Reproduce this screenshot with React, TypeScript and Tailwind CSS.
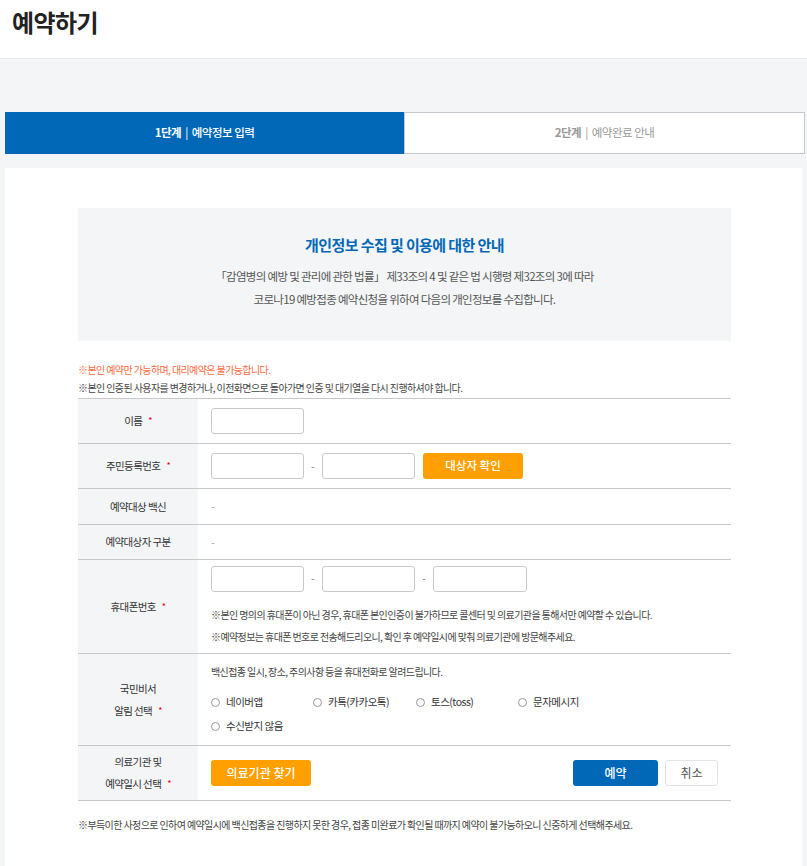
import { useState } from 'react';

const FONT = { fontFamily: '"Noto Sans CJK KR", "Noto Sans", sans-serif' };

const Star = () => <span className="ml-1.5 align-top text-[9px] text-[#e60012]">*</span>;

const Field = ({ w = 'w-[93px]' }: { w?: string }) => (
  <input type="text" className={`${w} h-[26px] rounded-[3px] border border-[#c8c8c8] bg-white px-2 text-[12px] outline-none`} />
);

const Dash = () => <span className="w-[18px] text-center text-[11px] text-[#888]">-</span>;

const Row = ({ label, className = '', children }: { label: React.ReactNode; className?: string; children: React.ReactNode }) => (
  <div className="flex border-b border-[#c8c8cc]">
    <div className={`flex w-[120px] shrink-0 items-center justify-center bg-[#f4f5f7] text-center text-[10.5px] leading-[22px] tracking-[-0.6px] text-[#333] ${className}`}>
      <div>{label}</div>
    </div>
    <div className="flex flex-1 items-center pl-[13px]">{children}</div>
  </div>
);

export default function App() {
  const [alarm, setAlarm] = useState('');
  const options = ['네이버앱', '카톡(카카오톡)', '토스(toss)', '문자메시지', '수신받지 않음'];

  return (
    <div className="min-h-[866px] bg-[#f4f5f7]" style={FONT}>
      <div className="h-[59px] border-b border-[#e6e7f0] bg-white pl-[12px] pt-[4px]">
        <h1 className="text-[24px] font-bold tracking-[-0.6px] text-[#222]">예약하기</h1>
      </div>

      <div className="pl-[5px] pr-[2px] pt-[53px]">
        <div className="flex h-[42px]">
          <div className="flex flex-1 items-center justify-center bg-[#0068b7] text-[11.5px] tracking-[-0.5px] text-white">
            <b>1단계</b>
            <span className="mx-[4px]">|</span>
            <span className="font-medium">예약정보 입력</span>
          </div>
          <div className="flex flex-1 items-center justify-center border border-[#c4c7cc] bg-white text-[11.5px] tracking-[-0.5px] text-[#999]">
            <b className="text-[#999]">2단계</b>
            <span className="mx-[4px]">|</span>
            <span>예약완료 안내</span>
          </div>
        </div>

        <div className="mr-[3px] mt-[14px] min-h-[700px] bg-white pt-[40px]">
          <div className="ml-[73px] w-[653px]">
            <div className="flex h-[133px] flex-col items-center bg-[#f4f5f7] pt-[26px] text-center">
              <h2 className="text-[15px] font-bold tracking-[-0.6px] text-[#0068b7]">개인정보 수집 및 이용에 대한 안내</h2>
              <p className="mt-[8px] text-[11.5px] leading-[23px] tracking-[-0.7px] text-[#555]">
                「감염병의 예방 및 관리에 관한 법률」 제33조의 4 및 같은 법 시행령 제32조의 3에 따라
                <br />
                코로나19 예방접종 예약신청을 위하여 다음의 개인정보를 수집합니다.
              </p>
            </div>

            <p className="mt-[20px] text-[10px] leading-[18px] tracking-[-0.6px] text-[#ff6a3d]">※본인 예약만 가능하며, 대리예약은 불가능합니다.</p>
            <p className="text-[10px] leading-[18px] tracking-[-0.6px] text-[#444]">※본인 인증된 사용자를 변경하거나, 이전화면으로 돌아가면 인증 및 대기열을 다시 진행하셔야 합니다.</p>

            <div className="mt-[1px] border-t border-[#c8c8cc]">
              <Row label={<>이름<Star /></>} className="h-[44px]">
                <Field />
              </Row>
              <Row label={<>주민등록번호<Star /></>} className="h-[44px]">
                <Field />
                <Dash />
                <Field />
                <button className="ml-[8px] h-[26px] w-[100px] rounded-[3px] bg-[#ff9f00] text-[11.5px] font-medium text-white">대상자 확인</button>
              </Row>
              <Row label="예약대상 백신" className="h-[35px]">
                <span className="text-[11px] text-[#aaa]">-</span>
              </Row>
              <Row label="예약대상자 구분" className="h-[34px]">
                <span className="text-[11px] text-[#aaa]">-</span>
              </Row>
              <Row label={<>휴대폰번호<Star /></>} className="h-[93px]">
                <div className="flex flex-col">
                  <div className="flex items-center">
                    <Field />
                    <Dash />
                    <Field />
                    <Dash />
                    <Field w="w-[94px]" />
                  </div>
                  <p className="mt-[12px] text-[10px] leading-[22px] tracking-[-0.6px] text-[#444]">
                    ※본인 명의의 휴대폰이 아닌 경우, 휴대폰 본인인증이 불가하므로 콜센터 및 의료기관을 통해서만 예약할 수 있습니다.
                    <br />
                    ※예약정보는 휴대폰 번호로 전송해드리오니, 확인 후 예약일시에 맞춰 의료기관에 방문해주세요.
                  </p>
                </div>
              </Row>
              <Row label={<>국민비서<br />알림 선택<Star /></>} className="h-[91px]">
                <div className="flex flex-col">
                  <p className="text-[10px] tracking-[-0.6px] text-[#444]">백신접종 일시, 장소, 주의사항 등을 휴대전화로 알려드립니다.</p>
                  <div className="mt-[14px] grid w-[420px] grid-cols-[102px_103px_102px_1fr] gap-y-[6px]">
                    {options.map((o) => (
                      <label key={o} className="flex h-[18px] cursor-pointer items-center text-[10.5px] tracking-[-0.5px] text-[#333]" onClick={() => setAlarm(o)}>
                        <span className={`mr-[6px] h-[9px] w-[9px] rounded-full border border-[#999] ${alarm === o ? 'bg-[#0068b7]' : ''}`} />
                        {o}
                      </label>
                    ))}
                  </div>
                </div>
              </Row>
              <Row label={<>의료기관 및<br />예약일시 선택<Star /></>} className="h-[54px]">
                <div className="flex w-full items-center">
                  <button className="h-[26px] w-[100px] rounded-[3px] bg-[#ff9f00] text-[12px] font-medium text-white">의료기관 찾기</button>
                  <button className="ml-auto h-[26px] w-[85px] rounded-[3px] bg-[#0068b7] text-[12px] font-medium text-white">예약</button>
                  <button className="ml-[7px] mr-[13px] h-[26px] w-[53px] rounded-[3px] border border-[#e0e3ea] bg-white text-[12px] text-[#555]">취소</button>
                </div>
              </Row>
            </div>

            <p className="mt-[16px] text-[10px] tracking-[-0.6px] text-[#444]">※부득이한 사정으로 인하여 예약일시에 백신접종을 진행하지 못한 경우, 접종 미완료가 확인될 때까지 예약이 불가능하오니 신중하게 선택해주세요.</p>
          </div>
        </div>
      </div>
    </div>
  );
}
